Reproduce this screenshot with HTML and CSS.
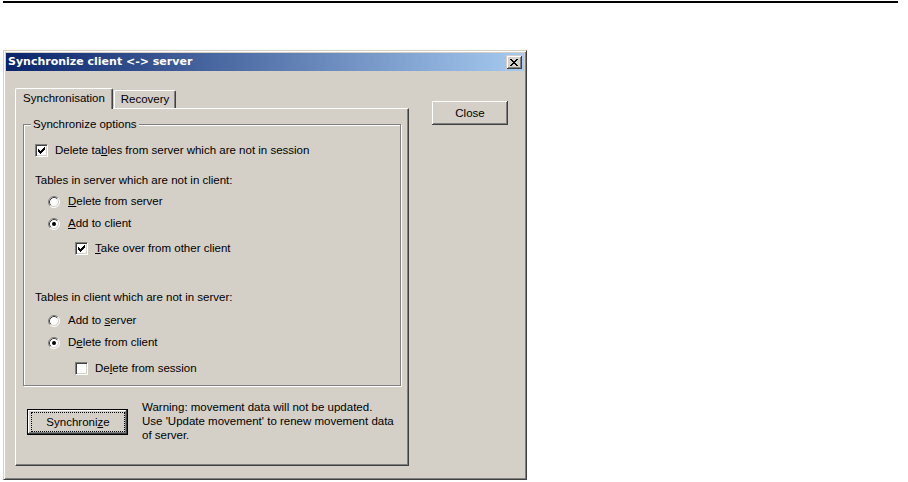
FILE: index.html
```html
<!DOCTYPE html>
<html>
<head>
<meta charset="utf-8">
<title>Synchronize client &lt;-&gt; server</title>
<link rel="stylesheet" href="styles.css">
</head>
<body>
<div class="topline"></div>
<div class="window">
  <div class="titlebar">
    <span class="title">Synchronize client &lt;-&gt; server</span>
    <span class="xbtn"><svg width="8" height="7" viewBox="0 0 8 7"><path fill="#000" d="M0 0h2v1h-2zM6 0h2v1h-2zM1 1h2v1h-2zM5 1h2v1h-2zM2 2h4v1h-4zM3 3h2v1h-2zM2 4h4v1h-4zM1 5h2v1h-2zM5 5h2v1h-2zM0 6h2v1h-2zM6 6h2v1h-2z"/></svg></span>
  </div>
  <div class="content">
    <div class="tabcol">
      <div class="tabs">
        <div class="tab active">Synchronisation</div>
        <div class="tab other">Recovery</div>
      </div>
      <div class="panel">
        <div class="group">
          <span class="legend">Synchronize options</span>
          <div class="row ind1 m13">
            <span class="cb"><svg width="7" height="7" viewBox="0 0 7 7"><path fill="#000" d="M6 0h1v1h-1zM5 1h2v1h-2zM0 2h1v1h-1zM4 2h3v1h-3zM0 3h2v1h-2zM3 3h3v1h-3zM0 4h5v1h-5zM1 5h3v1h-3zM2 6h1v1h-1z"/></svg></span>
            <span>Delete ta<u>b</u>les from server which are not in session</span>
          </div>
          <div class="row ind1 m17"><span>Tables in server which are not in client:</span></div>
          <div class="row ind2 m8">
            <svg class="radio" width="12" height="12" viewBox="0 0 12 12"><circle cx="6" cy="6" r="5" fill="#fff"/><path d="M2.11 9.89A5.5 5.5 0 0 1 9.89 2.11" fill="none" stroke="#808080"/><path d="M9.89 2.11A5.5 5.5 0 0 1 2.11 9.89" fill="none" stroke="#fff"/><path d="M2.82 9.18A4.5 4.5 0 0 1 9.18 2.82" fill="none" stroke="#404040"/><path d="M9.18 2.82A4.5 4.5 0 0 1 2.82 9.18" fill="none" stroke="#D4D0C8"/></svg>
            <span><u>D</u>elete from server</span>
          </div>
          <div class="row ind2 m9">
            <svg class="radio" width="12" height="12" viewBox="0 0 12 12"><circle cx="6" cy="6" r="5" fill="#fff"/><path d="M2.11 9.89A5.5 5.5 0 0 1 9.89 2.11" fill="none" stroke="#808080"/><path d="M9.89 2.11A5.5 5.5 0 0 1 2.11 9.89" fill="none" stroke="#fff"/><path d="M2.82 9.18A4.5 4.5 0 0 1 9.18 2.82" fill="none" stroke="#404040"/><path d="M9.18 2.82A4.5 4.5 0 0 1 2.82 9.18" fill="none" stroke="#D4D0C8"/><circle cx="6" cy="6" r="2" fill="#000"/></svg>
            <span><u>A</u>dd to client</span>
          </div>
          <div class="row ind3 m12">
            <span class="cb"><svg width="7" height="7" viewBox="0 0 7 7"><path fill="#000" d="M6 0h1v1h-1zM5 1h2v1h-2zM0 2h1v1h-1zM4 2h3v1h-3zM0 3h2v1h-2zM3 3h3v1h-3zM0 4h5v1h-5zM1 5h3v1h-3zM2 6h1v1h-1z"/></svg></span>
            <span><u>T</u>ake over from other client</span>
          </div>
          <div class="row ind1 m36"><span>Tables in client which are not in server:</span></div>
          <div class="row ind2 m10">
            <svg class="radio" width="12" height="12" viewBox="0 0 12 12"><circle cx="6" cy="6" r="5" fill="#fff"/><path d="M2.11 9.89A5.5 5.5 0 0 1 9.89 2.11" fill="none" stroke="#808080"/><path d="M9.89 2.11A5.5 5.5 0 0 1 2.11 9.89" fill="none" stroke="#fff"/><path d="M2.82 9.18A4.5 4.5 0 0 1 9.18 2.82" fill="none" stroke="#404040"/><path d="M9.18 2.82A4.5 4.5 0 0 1 2.82 9.18" fill="none" stroke="#D4D0C8"/></svg>
            <span>Add to <u>s</u>erver</span>
          </div>
          <div class="row ind2 m9">
            <svg class="radio" width="12" height="12" viewBox="0 0 12 12"><circle cx="6" cy="6" r="5" fill="#fff"/><path d="M2.11 9.89A5.5 5.5 0 0 1 9.89 2.11" fill="none" stroke="#808080"/><path d="M9.89 2.11A5.5 5.5 0 0 1 2.11 9.89" fill="none" stroke="#fff"/><path d="M2.82 9.18A4.5 4.5 0 0 1 9.18 2.82" fill="none" stroke="#404040"/><path d="M9.18 2.82A4.5 4.5 0 0 1 2.82 9.18" fill="none" stroke="#D4D0C8"/><circle cx="6" cy="6" r="2" fill="#000"/></svg>
            <span>D<u>e</u>lete from client</span>
          </div>
          <div class="row ind3 m13">
            <span class="cb"></span>
            <span>De<u>l</u>ete from session</span>
          </div>
        </div>
        <div class="syncrow">
          <div class="btn default"><span class="focus">Synchroni<u>z</u>e</span></div>
          <div class="warning">Warning: movement data will not be updated.<br>Use 'Update movement' to renew movement data<br>of server.</div>
        </div>
      </div>
    </div>
    <div class="btn close">Close</div>
  </div>
</div>
</body>
</html>
```
FILE: styles.css
```css
body {
  margin: 0;
  background: #fff;
  font-family: "Liberation Sans", Arial, sans-serif;
  font-size: 11.5px;
  color: #000;
}
.topline {
  height: 2px;
  background: #000;
  margin: 1px 10px 0 3px;
}
.window {
  box-sizing: border-box;
  width: 524px;
  height: 430px;
  margin: 47px 0 0 3px;
  background: #D4D0C8;
  border: 1px solid;
  border-color: #D4D0C8 #404040 #404040 #D4D0C8;
  box-shadow: inset 1px 1px #fff, inset -1px -1px #808080;
  padding: 2px;
}
.titlebar {
  height: 18px;
  display: flex;
  align-items: center;
  justify-content: space-between;
  background: linear-gradient(to right, #0A246A, #A6CAF0);
}
.title {
  color: #fff;
  font-family: "DejaVu Sans", Verdana, sans-serif;
  font-size: 11px;
  font-weight: bold;
  padding-left: 2px;
  line-height: 18px;
}
.xbtn {
  width: 16px;
  height: 14px;
  margin-right: 2px;
  background: #D4D0C8;
  box-shadow: inset 1px 1px #D4D0C8, inset -1px -1px #404040, inset 2px 2px #fff, inset -2px -2px #808080;
  display: flex;
  align-items: center;
  justify-content: center;
}
.xbtn svg { display: block; }
.content {
  display: flex;
  align-items: flex-start;
  padding: 17px 0 0 9px;
}
.tabcol { width: 394px; }
.tabs {
  display: flex;
  align-items: flex-end;
  height: 20px;
}
.tab {
  box-sizing: border-box;
  height: 18px;
  line-height: 13px;
  padding-top: 2px;
  text-align: center;
  border-top: 1px solid #fff;
  border-left: 1px solid #fff;
  border-right: 1px solid #404040;
  box-shadow: inset -1px 0 #808080;
  border-radius: 2px 2px 0 0;
}
.tab.active {
  width: 98px;
  height: 21px;
  margin-bottom: -1px;
  position: relative;
  z-index: 1;
  background: #D4D0C8;
  padding-top: 3px;
}
.tab.other {
  width: 62px;
  margin-left: 1px;
}
.panel {
  box-sizing: border-box;
  height: 358px;
  border: 1px solid;
  border-color: #fff #404040 #404040 #fff;
  box-shadow: inset -1px -1px #808080;
  padding: 15px 7px 0 7px;
}
.group {
  border: 1px solid #808080;
  box-shadow: inset 1px 1px #fff, 1px 1px #fff;
  padding-bottom: 10px;
}
.legend {
  display: block;
  width: fit-content;
  height: 13px;
  line-height: 13px;
  margin: -7px 0 0 7px;
  padding: 0 2px;
  background: #D4D0C8;
}
.row {
  display: flex;
  align-items: center;
  height: 13px;
  line-height: 13px;
  gap: 7px;
  white-space: nowrap;
}
.ind1 { margin-left: 11px; }
.ind2 { margin-left: 24px; gap: 8px; }
.ind3 { margin-left: 51px; }
.m8 { margin-top: 8px; }
.m9 { margin-top: 9px; }
.m10 { margin-top: 10px; }
.m12 { margin-top: 12px; }
.m13 { margin-top: 13px; }
.m17 { margin-top: 17px; }
.m36 { margin-top: 36px; }
.cb {
  box-sizing: border-box;
  width: 13px;
  height: 13px;
  flex: none;
  background: #fff;
  border: 1px solid;
  border-color: #808080 #fff #fff #808080;
  box-shadow: inset 1px 1px #404040, inset -1px -1px #D4D0C8;
  display: flex;
  align-items: center;
  justify-content: center;
}
.cb svg, .radio { display: block; flex: none; }
.syncrow {
  display: flex;
  align-items: flex-start;
  margin-top: 14px;
}
.btn {
  box-sizing: border-box;
  display: flex;
  align-items: center;
  justify-content: center;
  background: #D4D0C8;
  box-shadow: inset -1px -1px #404040, inset 1px 1px #fff, inset -2px -2px #808080;
}
.close {
  width: 76px;
  height: 24px;
  margin: 13px 0 0 23px;
}
.default {
  width: 101px;
  height: 26px;
  margin: 9px 0 0 4px;
  border: 1px solid #000;
  padding: 2px 2px 2px 3px;
}
.focus {
  box-sizing: border-box;
  width: 100%;
  height: 100%;
  border: 1px dotted #000;
  display: flex;
  align-items: center;
  justify-content: center;
}
.warning {
  margin-left: 14px;
  line-height: 14px;
}
```
